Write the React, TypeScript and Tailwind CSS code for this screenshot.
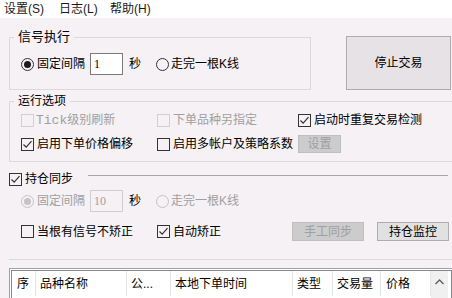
import clsx from 'clsx';

function Radio({ checked = false, disabled = false }: { checked?: boolean; disabled?: boolean }) {
  return (
    <span
      className={clsx(
        'w-[13px] h-[13px] rounded-full border flex items-center justify-center shrink-0',
        disabled ? 'border-[#c4c4c4]' : 'border-[#333333]'
      )}
    >
      {checked && (
        <span className={clsx('w-[7px] h-[7px] rounded-full', disabled ? 'bg-[#c4c4c4]' : 'bg-[#1a1a1a]')} />
      )}
    </span>
  );
}

function Check({ checked = false, disabled = false }: { checked?: boolean; disabled?: boolean }) {
  return (
    <span
      className={clsx(
        'w-[13px] h-[13px] border flex items-center justify-center shrink-0',
        disabled ? 'border-[#d0d0d0]' : 'border-[#333333]'
      )}
    >
      {checked && (
        <svg width="11" height="11" viewBox="0 0 11 11">
          <path d="M1.5 5.5 L4.2 8.2 L9.5 2.2" fill="none" stroke="#333333" strokeWidth="1.2" />
        </svg>
      )}
    </span>
  );
}

function Btn({ label, disabled = false, className }: { label: string; disabled?: boolean; className?: string }) {
  return (
    <div
      className={clsx(
        'flex items-center justify-center border shrink-0',
        disabled ? 'bg-[#cccccc] border-[#bfbfbf] text-[#9f9f9f]' : 'bg-[#e1e1e1] border-[#adadad] text-black',
        className
      )}
    >
      {label}
    </div>
  );
}

const columns = [
  { name: '序', w: 'w-[24px] pl-[5px]' },
  { name: '品种名称', w: 'w-[91px] pl-[4px]' },
  { name: '公...', w: 'w-[44px] pl-[4px]' },
  { name: '本地下单时间', w: 'w-[122px] pl-[4px]' },
  { name: '类型', w: 'w-[40px] pl-[4px]' },
  { name: '交易量', w: 'w-[48px] pl-[4px]' },
  { name: '价格', w: 'w-[50px] pl-[5px]' },
];

export default function App() {
  return (
    <div className="w-[452px] h-[298px] overflow-hidden bg-[#f5f1f4] text-[12px] leading-[16px] text-black font-['Liberation_Sans','Noto_Sans_CJK_SC',sans-serif]">
      {/* menu */}
      <div className="h-[18px] bg-white flex items-center pl-[4px] text-[#1a1a1a]">
        <span className="w-[55px]">设置(S)</span>
        <span className="w-[51px]">日志(L)</span>
        <span>帮助(H)</span>
      </div>

      {/* 信号执行 + 停止交易 */}
      <div className="flex pl-[9px] mt-[11px]">
        <fieldset className="w-[302px] h-[61px] border border-[#dcd8db]">
          <legend className="ml-[4px] px-[4px] text-[13px]">信号执行</legend>
          <div className="flex items-center h-[22px] mt-[8px] pl-[11px]">
            <Radio checked />
            <span className="ml-[3px]">固定间隔</span>
            <div className="ml-[5px] w-[33px] h-[22px] border border-[#7a7a7a] bg-white pl-[3px] flex items-center font-['Liberation_Serif',serif]">
              1
            </div>
            <span className="ml-[6px]">秒</span>
            <span className="ml-[15px]"><Radio /></span>
            <span className="ml-[2px]">走完一根K线</span>
          </div>
        </fieldset>
        <Btn label="停止交易" className="ml-[35px] mt-[7px] w-[105px] h-[54px] bg-[#e6e2e5]" />
      </div>

      {/* 运行选项 */}
      <fieldset className="ml-[9px] mt-[3px] w-[460px] h-[69px] border border-[#dcd8db]">
        <legend className="ml-[4px] px-[4px]">运行选项</legend>
        <div className="flex items-center h-[16px] mt-[3px] pl-[11px] text-[#a0a0a0]">
          <div className="w-[136px] flex items-center">
            <Check disabled />
            <span className="ml-[2px]">
              <span className="font-['Liberation_Mono',monospace] text-[13px]">Tick</span>级别刷新
            </span>
          </div>
          <div className="w-[141px] flex items-center">
            <Check disabled />
            <span className="ml-[3px]">下单品种另指定</span>
          </div>
          <div className="flex items-center text-black">
            <Check checked />
            <span className="ml-[3px]">启动时重复交易检测</span>
          </div>
        </div>
        <div className="flex items-center h-[18px] mt-[7px] pl-[11px]">
          <div className="w-[136px] flex items-center">
            <Check checked />
            <span className="ml-[3px]">启用下单价格偏移</span>
          </div>
          <div className="w-[141px] flex items-center">
            <Check />
            <span className="ml-[3px]">启用多帐户及策略系数</span>
          </div>
          <Btn label="设置" disabled className="w-[43px] h-[18px]" />
        </div>
      </fieldset>

      {/* 持仓同步 */}
      <div className="flex h-[16px] mt-[9px] pl-[9px] pr-[4px]">
        <div className="flex items-center">
          <Check checked />
          <span className="ml-[3px]">持仓同步</span>
        </div>
        <div className="flex-1 h-px bg-[#a9a6a8] mt-[4px] ml-[15px]" />
      </div>
      <div className="flex items-center h-[22px] mt-[3px] pl-[21px] text-[#a0a0a0]">
        <Radio checked disabled />
        <span className="ml-[3px]">固定间隔</span>
        <div className="ml-[5px] w-[33px] h-[22px] border border-[#cfcfcf] pl-[3px] flex items-center font-['Liberation_Serif',serif]">
          10
        </div>
        <span className="ml-[6px] text-black">秒</span>
        <span className="ml-[15px]"><Radio disabled /></span>
        <span className="ml-[2px]">走完一根K线</span>
      </div>
      <div className="flex items-center h-[19px] mt-[10px] pl-[21px]">
        <div className="w-[136px] flex items-center">
          <Check />
          <span className="ml-[3px]">当根有信号不矫正</span>
        </div>
        <div className="w-[135px] flex items-center">
          <Check checked />
          <span className="ml-[3px]">自动矫正</span>
        </div>
        <Btn label="手工同步" disabled className="w-[72px] h-[19px]" />
        <Btn label="持仓监控" className="ml-[13px] w-[72px] h-[19px]" />
      </div>

      <div className="ml-[9px] mt-[18px] h-px bg-[#dcd8db]" />

      {/* list */}
      <div className="ml-[9px] mt-[8px] w-[445px] h-[40px] border border-[#a0a0a0] p-px bg-white">
        <div className="h-full border border-[#828790] flex">
          <div className="flex h-[25px]">
            {columns.map((c) => (
              <div key={c.name} className={clsx('flex items-center border-r border-[#e5e5e5]', c.w)}>
                {c.name}
              </div>
            ))}
          </div>
          <div className="w-[17px] flex justify-center pt-[8px] bg-[#f0f0f0]">
            <svg width="9" height="6" viewBox="0 0 9 6">
              <path d="M0.5 5 L4.5 1 L8.5 5" fill="none" stroke="#606060" strokeWidth="1.4" />
            </svg>
          </div>
        </div>
      </div>
    </div>
  );
}
